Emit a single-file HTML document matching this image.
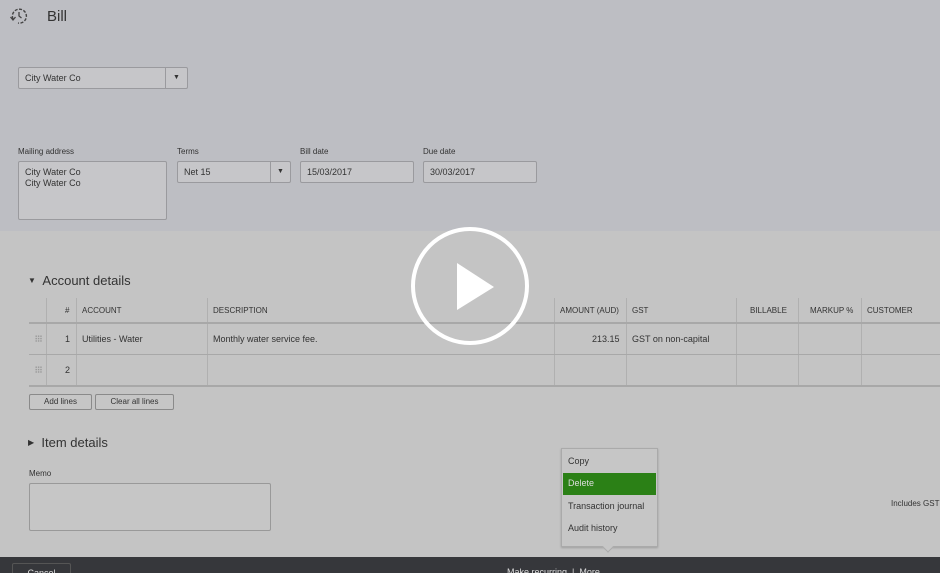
<!DOCTYPE html><html><head><style>
*{margin:0;padding:0;box-sizing:border-box}
html,body{width:940px;height:573px;overflow:hidden}
body{background:#c4c4c4;font-family:"Liberation Sans",sans-serif;color:#333;position:relative;font-size:9px}
.a{position:absolute}
.top{left:0;top:0;width:940px;height:231px;background:#bdbec3}
.box{position:absolute;border:1px solid #9a9a9e;background:#c6c6c9;border-radius:2px;font-size:9px;color:#333;padding-left:6px}
.lbl{position:absolute;font-size:8px;color:#333}
.v{position:absolute;width:1px;background:#b0b0b0}
.h{position:absolute;height:1px;background:#a8a8a8;left:29px;width:911px}
.th{position:absolute;top:306px;font-size:8px;color:#333}
.btn{position:absolute;border:1px solid #8a8a8a;border-radius:2px;font-size:8px;text-align:center;line-height:14px;color:#333;background:#c6c6c6}
.dots{position:absolute;width:7px;height:7px;background-image:radial-gradient(#999 45%,transparent 50%);background-size:2.4px 2.4px}
</style></head><body>
<div class="a top"></div>
<svg class="a" style="left:9px;top:7px" width="20" height="18" viewBox="0 0 20 18"><path d="M4 12 A7 7 0 1 1 9 16" fill="none" stroke="#444" stroke-width="1.4" stroke-dasharray="3 1.5"/><path d="M10 5v4l2.5 2" fill="none" stroke="#444" stroke-width="1.3"/><path d="M1.5 10l2.5 3 2.5-3" fill="none" stroke="#444" stroke-width="1.3"/></svg>
<div class="a" style="left:47px;top:8px;font-size:15px;color:#333">Bill</div>
<div class="box" style="left:18px;top:67px;width:170px;height:22px;line-height:20px">City Water Co<div class="a" style="right:0;top:0;width:22px;height:20px;border-left:1px solid #9a9a9e;text-align:center;font-size:7px">▼</div></div>
<div class="lbl" style="left:18px;top:147px">Mailing address</div>
<div class="lbl" style="left:177px;top:147px">Terms</div>
<div class="lbl" style="left:300px;top:147px">Bill date</div>
<div class="lbl" style="left:423px;top:147px">Due date</div>
<div class="box" style="left:18px;top:161px;width:149px;height:59px;padding-top:5px;line-height:11px">City Water Co<br>City Water Co</div>
<div class="box" style="left:177px;top:161px;width:114px;height:22px;line-height:20px">Net 15<div class="a" style="right:0;top:0;width:20px;height:20px;border-left:1px solid #9a9a9e;text-align:center;font-size:7px">▼</div></div>
<div class="box" style="left:300px;top:161px;width:114px;height:22px;line-height:20px">15/03/2017</div>
<div class="box" style="left:423px;top:161px;width:114px;height:22px;line-height:20px">30/03/2017</div>
<div class="a" style="left:28px;top:273px;font-size:13px;color:#333"><span style="font-size:8px;position:relative;top:-2px">▼</span>&nbsp; Account details</div>
<div class="v" style="left:46px;top:298px;height:88px"></div>
<div class="v" style="left:76px;top:298px;height:88px"></div>
<div class="v" style="left:207px;top:298px;height:88px"></div>
<div class="v" style="left:554px;top:298px;height:88px"></div>
<div class="v" style="left:626px;top:298px;height:88px"></div>
<div class="v" style="left:736px;top:298px;height:88px"></div>
<div class="v" style="left:798px;top:298px;height:88px"></div>
<div class="v" style="left:861px;top:298px;height:88px"></div>
<div class="h" style="top:322px;height:2px"></div>
<div class="h" style="top:354px"></div>
<div class="h" style="top:385px;height:2px"></div>
<div class="th" style="left:65px">#</div>
<div class="th" style="left:82px">ACCOUNT</div>
<div class="th" style="left:213px">DESCRIPTION</div>
<div class="th" style="left:560px">AMOUNT (AUD)</div>
<div class="th" style="left:632px">GST</div>
<div class="th" style="left:750px">BILLABLE</div>
<div class="th" style="left:810px">MARKUP %</div>
<div class="th" style="left:867px">CUSTOMER</div>
<div class="dots" style="left:35px;top:335px"></div>
<div class="dots" style="left:35px;top:366px"></div>
<div class="a" style="left:65px;top:334px">1</div>
<div class="a" style="left:82px;top:334px">Utilities - Water</div>
<div class="a" style="left:213px;top:334px">Monthly water service fee.</div>
<div class="a" style="left:592px;top:334px">213.15</div>
<div class="a" style="left:632px;top:334px">GST on non-capital</div>
<div class="a" style="left:65px;top:365px">2</div>
<div class="btn" style="left:29px;top:394px;width:63px;height:16px">Add lines</div>
<div class="btn" style="left:95px;top:394px;width:79px;height:16px">Clear all lines</div>
<div class="a" style="left:28px;top:435px;font-size:13px"><span style="font-size:8px;position:relative;top:-2px">▶</span>&nbsp; Item details</div>
<div class="lbl" style="left:29px;top:469px">Memo</div>
<div class="a" style="left:29px;top:483px;width:242px;height:48px;border:1px solid #999;border-radius:2px;background:#c6c6c6"></div>
<div class="a" style="left:891px;top:499px;font-size:8px">Includes GST</div>
<div class="a" style="left:0;top:557px;width:940px;height:16px;background:#36373b"></div>
<div class="a" style="left:12px;top:563px;width:59px;height:10px;border:1px solid #555;border-bottom:none;border-radius:2px 2px 0 0;color:#ddd;font-size:9px;text-align:center;padding-top:4px;overflow:hidden">Cancel</div>
<div class="a" style="left:507px;top:567px;color:#ddd;font-size:9px">Make recurring &nbsp;|&nbsp; More</div>
<div class="a" style="left:561px;top:448px;width:97px;height:99px;background:#c6c6c6;border:1px solid #aaa;box-shadow:0 1px 2px rgba(0,0,0,.2)">
<div style="padding:7px 6px 0;height:24px;font-size:9px">Copy</div>
<div style="margin:0 1px;height:22px;background:#2b8016;color:#ddd;padding:5px 5px;font-size:9px">Delete</div>
<div style="padding:6px 6px 0;height:22px;font-size:9px">Transaction journal</div>
<div style="padding:6px 6px 0;height:22px;font-size:9px">Audit history</div>
</div>
<div class="a" style="left:604px;top:543px;width:8px;height:8px;background:#c6c6c6;transform:rotate(45deg);border-right:1px solid #aaa;border-bottom:1px solid #aaa"></div>
<svg class="a" style="left:410px;top:226px" width="120" height="120"><circle cx="60" cy="60" r="57" fill="none" stroke="#fff" stroke-width="4"/><path d="M47 37 L84 61 L47 84 Z" fill="#fff"/></svg>
</body></html>
